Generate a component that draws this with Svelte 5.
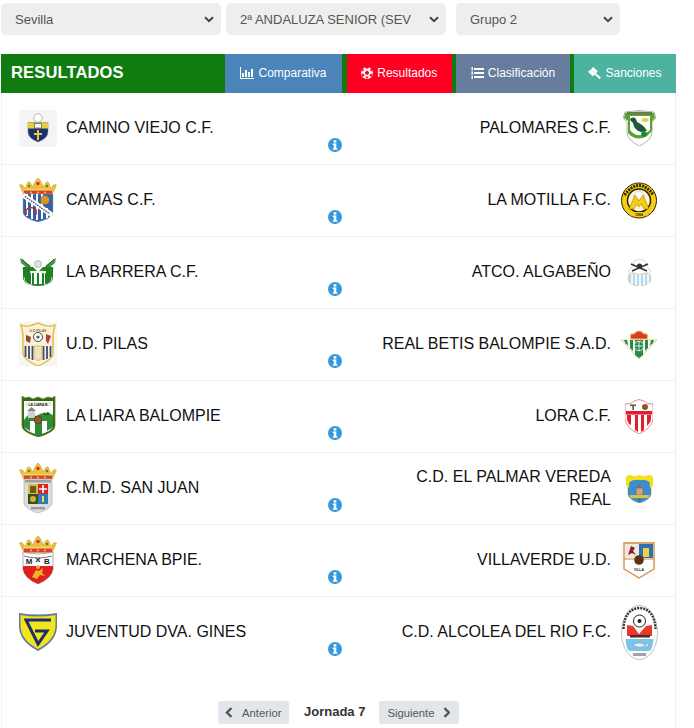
<script>
  const rows = [
    { home: 'CAMINO VIEJO C.F.', hc: 'l1', away: 'PALOMARES C.F.', ac: 'r1' },
    { home: 'CAMAS C.F.', hc: 'l2', away: 'LA MOTILLA F.C.', ac: 'r2' },
    { home: 'LA BARRERA C.F.', hc: 'l3', away: 'ATCO. ALGABEÑO', ac: 'r3' },
    { home: 'U.D. PILAS', hc: 'l4', away: 'REAL BETIS BALOMPIE S.A.D.', ac: 'r4' },
    { home: 'LA LIARA BALOMPIE', hc: 'l5', away: 'LORA C.F.', ac: 'r5' },
    { home: 'C.M.D. SAN JUAN', hc: 'l6', away: 'C.D. EL PALMAR VEREDA REAL', ac: 'r6' },
    { home: 'MARCHENA BPIE.', hc: 'l7', away: 'VILLAVERDE U.D.', ac: 'r7' },
    { home: 'JUVENTUD DVA. GINES', hc: 'l8', away: 'C.D. ALCOLEA DEL RIO F.C.', ac: 'r8' }
  ];
</script>

{#snippet crown()}
  <path d="M0.5 7 Q3 5.5 4.5 8 L6 11 L8.5 4.5 Q10 3 11.5 5 L13.5 9 L17 2 L19 0 L21 2 L24.5 9 L26.5 5 Q28 3 29.5 4.5 L32 11 L33.5 8 Q35 5.5 37.5 7 L33.5 16 H4.5Z" fill="#edbf3c" stroke="#c6951e" stroke-width=".5"/>
  <path d="M5 12.5 H33 V16.5 H5Z" fill="#d8402f"/>
  <path d="M5 11.5 H33" stroke="#f3d76a" stroke-width="1.4"/>
  <circle cx="19" cy="5.5" r="1.7" fill="#c8352b"/>
  <circle cx="10" cy="8" r="1.2" fill="#3d8a3d"/>
  <circle cx="28" cy="8" r="1.2" fill="#3d8a3d"/>
  <circle cx="12" cy="14.5" r=".9" fill="#f3d76a"/>
  <circle cx="19" cy="14.5" r=".9" fill="#f3d76a"/>
  <circle cx="26" cy="14.5" r=".9" fill="#f3d76a"/>
{/snippet}

{#snippet crest(id)}
  {#if id === 'l1'}
    <svg width="38" height="37" viewBox="0 0 38 37">
      <rect width="38" height="37" fill="#f4f4f4"/>
      <circle cx="19" cy="8" r="4.2" fill="#fff" stroke="#999" stroke-width=".7"/>
      <path d="M9 12.5 H29 V22 Q29 28 19 32 Q9 28 9 22Z" fill="#1d2f78" stroke="#777" stroke-width=".5"/>
      <rect x="9" y="12.5" width="20" height="6" fill="#e9cd3c"/>
      <rect x="15.5" y="13.5" width="7" height="4.5" fill="#f4f4f4" stroke="#333" stroke-width=".5"/>
      <path d="M18 20 h2 v3 h3 v2 h-3 v5 h-2 v-5 h-3 v-2 h3z" fill="#e9cd3c"/>
    </svg>
  {:else if id === 'l2'}
    <svg width="38" height="44" viewBox="0 0 38 44">
      {@render crown()}
      <path d="M4 16 H34 V34 Q34 40 19 44 Q4 40 4 34Z" fill="#2f62a8" stroke="#9aa" stroke-width=".5"/>
      <path d="M8 16 V38 M13 16 V41 M18 16 V42 M23 16 V41 M28 30 V40" stroke="#fff" stroke-width="2"/>
      <path d="M4 17 L33 37" stroke="#fff" stroke-width="5"/>
      <path d="M6 18.5 L31 36" stroke="#333" stroke-width="1.2" stroke-dasharray="1.5 1"/>
      <circle cx="26" cy="22" r="4.6" fill="#d5952c" stroke="#8a5a14" stroke-width=".6"/>
      <path d="M7 37 V32 Q12 27 17 32 V37" fill="none" stroke="#c62828" stroke-width="1.6"/>
    </svg>
  {:else if id === 'l3'}
    <svg width="38" height="30" viewBox="0 0 38 30">
      <path d="M1 1 L12 9 L8 11 L2 6Z" fill="#3d9a3d"/>
      <path d="M37 1 L26 9 L30 11 L36 6Z" fill="#3d9a3d"/>
      <path d="M3 2 L14 13 M35 2 L24 13" stroke="#333" stroke-width=".8"/>
      <circle cx="19" cy="7" r="3.4" fill="#dfe6df" stroke="#6a8a6a" stroke-width=".5"/>
      <path d="M4 13 Q2 9 9 10 L14 10 L19 15 L24 10 L29 10 Q36 9 34 13 V22 Q32 29 19 29 Q6 29 4 22Z" fill="#1e7f24"/>
      <path d="M12 15 H26 V27 H12Z" fill="#fff"/>
      <path d="M14 15 V27 M19 15 V28 M24 15 V27" stroke="#1e7f24" stroke-width="2"/>
      <path d="M11 15 H27" stroke="#eaf2ea" stroke-width="2.2"/>
      <path d="M5 20 Q5 27 13 28 M33 20 Q33 27 25 28" stroke="#cfe4cf" fill="none"/>
    </svg>
  {:else if id === 'l4'}
    <svg width="38" height="44" viewBox="0 0 38 44">
      <rect width="38" height="44" fill="#f6f5f2"/>
      <path d="M2 3 Q8 6 19 1 Q30 6 36 3 L34 12 V32 Q33 38 19 44 Q5 38 4 32 V12Z" fill="#fbf3d8" stroke="#e2b432" stroke-width="1.3"/>
      <text x="19" y="9.5" class="tiny" text-anchor="middle">U.D.PILAS</text>
      <path d="M6.5 24 v11 M10 24 v13 M13.5 24 v14 M24.5 24 v14 M28 24 v13 M31.5 24 v11" stroke="#3f4a7c" stroke-width="1.8"/>
      <circle cx="19" cy="15" r="4.5" fill="#fff" stroke="#333" stroke-width=".9"/>
      <circle cx="19" cy="15" r="1.6" fill="#3a4fa0"/>
      <path d="M7 13 l5 2 l-1 6 l-4 -2z" fill="#8f4a3a"/>
      <path d="M27 12 l5 2 l-3 8 l-2 -3z" fill="#b53a4a"/>
      <path d="M15 24 H23 V36 Q19 41 15 36Z" fill="#efe4b8" stroke="#d2ae45" stroke-width=".7"/>
    </svg>
  {:else if id === 'l5'}
    <svg width="35" height="41" viewBox="0 0 35 41">
      <path d="M1 0 L4 2 L8 1 L12 3 L17 1 L22 3 L27 1 L31 2 L34 0 V30 Q34 36 17.5 41 Q1 36 1 30Z" fill="#2a6a1e" stroke="#8c7a1c" stroke-width=".8"/>
      <path d="M3 5 H32 V25 H3Z" fill="#fff"/>
      <rect x="4" y="6" width="27" height="4" fill="#e9ecd9"/>
      <text x="17.5" y="9.6" class="tiny dark" text-anchor="middle">LA LIARA B.</text>
      <path d="M3 24 Q8 15 15 20 Q24 14 32 19 V26 H3Z" fill="#2f8f35"/>
      <rect x="7" y="15" width="7" height="7" fill="#cfcfcf"/>
      <path d="M6 15 L10.5 11 L15 15Z" fill="#888"/>
      <text x="26" y="19" class="tiny dark" text-anchor="middle">L.B.</text>
      <path d="M3 25 H32 V30 Q32 35 17.5 39 Q3 35 3 30Z" fill="#fff"/>
      <path d="M3 25 H9 V35 L3 31Z M14 25 H21 V39 L17.5 40 L14 39Z M26 25 H32 V31 L26 35Z" fill="#2b8a33"/>
      <circle cx="17" cy="24" r="4" fill="#8c5a2a" stroke="#4d3214" stroke-width=".6"/>
    </svg>
  {:else if id === 'l6'}
    <svg width="38" height="50" viewBox="0 0 38 50">
      {@render crown()}
      <path d="M5 16 H33 V40 Q32 46 19 50 Q6 46 5 40Z" fill="#dcdcdc" stroke="#a6a6a6" stroke-width=".6"/>
      <rect x="6" y="17" width="26" height="2.5" fill="#777" opacity=".6"/>
      <rect x="9" y="21" width="10" height="10" fill="#d3c04a"/>
      <rect x="19" y="21" width="10" height="10" fill="#d3272a"/>
      <rect x="9" y="31" width="10" height="10" fill="#3f4a1e"/>
      <rect x="19" y="31" width="10" height="10" fill="#2b7fb5"/>
      <rect x="11" y="23" width="6" height="7" fill="#6a5d1a"/>
      <path d="M24 22 v8 M20 26 h8" stroke="#fff" stroke-width="1.6"/>
      <circle cx="14" cy="36" r="3" fill="#d0b630"/>
      <rect x="23" y="33" width="2" height="6" fill="#e5e04d"/>
      <rect x="12" y="44" width="14" height="2.4" fill="#666" opacity=".55"/>
    </svg>
  {:else if id === 'l7'}
    <svg width="38" height="48" viewBox="0 0 38 48">
      {@render crown()}
      <path d="M4 16 Q19 20 34 16 V33 Q33 42 19 48 Q5 42 4 33Z" fill="#fff" stroke="#8a8a8a" stroke-width=".7"/>
      <path d="M4 30 H34 V33 Q33 42 19 48 Q5 42 4 33Z" fill="#e21f1f"/>
      <path d="M5 20 Q19 24 33 20" fill="none" stroke="#555" stroke-width=".8"/>
      <text x="10" y="28" class="mb" text-anchor="middle">M</text>
      <text x="28" y="28" class="mb" text-anchor="middle">B</text>
      <path d="M17 22 l4 4 M21 22 l-4 4" stroke="#444" stroke-width="1.2"/>
      <circle cx="19" cy="31" r="2" fill="#e6b23a"/>
      <path d="M13 41 L17 34 L20 35 L24 32 L23 37 L26 40 L21 39 L18 43Z" fill="#f0b429"/>
    </svg>
  {:else if id === 'l8'}
    <svg width="38" height="38" viewBox="0 0 38 38">
      <path d="M0 0 Q19 3 38 0 V13 Q38 28 19 38 Q0 28 0 13Z" fill="#5f7aa0"/>
      <path d="M1.5 2 Q19 5 36.5 2 V13 Q36 27 19 36 Q2 27 1.5 13Z" fill="#f2e51c"/>
      <path d="M32 7 H7 L19 31 L28 18 H16" fill="none" stroke="#1c2f6b" stroke-width="3"/>
    </svg>
  {:else if id === 'r1'}
    <svg width="33" height="36" viewBox="0 0 33 36">
      <path d="M2 2 Q16 -1 31 2 L33 8 L29 12 V22 Q29 30 16.5 36 Q4 30 4 22 V12 L0 8Z" fill="#fff" stroke="#a88" stroke-width=".7"/>
      <path d="M2 3 Q16 0 31 3 L32 8 L29 11 V21 L24 26 Q16 31 8 26 L5 23 V11 L1 8Z" fill="#55a82c"/>
      <path d="M7 6 H27 V20 L22 24 Q15 27 10 23 L7 20Z" fill="#fff"/>
      <rect x="4" y="2" width="25" height="2.5" fill="#6c7a4a"/>
      <path d="M8 8 Q13 6 14 12 Q21 15 24 21 L18 22 Q11 20 10 13 L7 10Z" fill="#1e5a3a"/>
      <circle cx="21" cy="24" r="2.8" fill="#148a3e"/>
      <ellipse cx="22" cy="10" rx="3.5" ry="2.2" fill="#e2d35e"/>
    </svg>
  {:else if id === 'r2'}
    <svg width="36" height="37" viewBox="0 0 36 37">
      <circle cx="18" cy="18.5" r="17.5" fill="#f6cd12" stroke="#2a2408" stroke-width="1"/>
      <circle cx="18" cy="18.5" r="11.5" fill="#fff7c8" stroke="#2a2408" stroke-width="1.5"/>
      <path d="M12 14 Q18 4 24 14 L18 18Z" fill="#fff" stroke="#999" stroke-width=".4"/>
      <path d="M8 27 L14 13 L18 19 L22 13 L28 27 H23 L20 22 L18 25 L16 22 L13 27Z" fill="#f6cd12" stroke="#8a7108" stroke-width=".5"/>
      <path d="M3.5 13 Q18 -6 32.5 13" fill="none" stroke="#2a2408" stroke-width="3" stroke-dasharray="2 1"/>
      <path d="M9 30 H27 V33.5 H9Z" fill="#f6cd12"/>
      <text x="18" y="33.5" class="tiny dark" text-anchor="middle">1984</text>
    </svg>
  {:else if id === 'r3'}
    <svg width="25" height="27" viewBox="0 0 25 27">
      <path d="M2 14 Q0 12 5 8 L7 2 L12.5 0 L18 2 L20 8 Q25 12 23 14" fill="#fff" stroke="#dcc9a5" stroke-width=".8"/>
      <path d="M4 5 L20 12 M21 5 L5 12" stroke="#333" stroke-width="1.6"/>
      <circle cx="12.5" cy="7" r="2.6" fill="#333"/>
      <path d="M1 20 Q1 13 7 14 Q12 17 18 14 Q24 13 24 20 Q24 26 12.5 27 Q1 26 1 20Z" fill="#b4dbf0" stroke="#dcc9a5" stroke-width=".8"/>
      <path d="M5 15 V25 M9 15 V26 M13 16 V27 M17 15 V26 M21 15 V25" stroke="#fff" stroke-width="1.6"/>
    </svg>
  {:else if id === 'r4'}
    <svg width="36" height="30" viewBox="0 0 36 30">
      <path d="M0 11 H36 L18 30Z" fill="#fff" stroke="#e3bf54" stroke-width=".7"/>
      <path d="M3 11 H6 L7.5 17 L4 14Z M9 11 H12 V22 L9 19Z M14 11 H22 V26 L18 29 L14 26Z M24 11 H27 V19 L24 22Z M30 11 H33 L32 14 L28.5 17Z" fill="#2a8a4a"/>
      <circle cx="18" cy="17" r="4.8" fill="#2a8a4a" stroke="#fff" stroke-width=".8"/>
      <path d="M13 17 H23 M18 12 V22" stroke="#fff" stroke-width=".8"/>
      <path d="M10 10 Q8 4 13 5 Q18 -1 23 5 Q28 4 26 10Z" fill="#d83a2e" stroke="#e8b93a" stroke-width="1.1"/>
    </svg>
  {:else if id === 'r5'}
    <svg width="28" height="35" viewBox="0 0 28 35">
      <path d="M0 5 Q7 5 9 2 Q14 -1 19 2 Q21 5 28 5 V20 Q27 29 14 35 Q1 29 0 20Z" fill="#fff" stroke="#ea7b85" stroke-width=".9"/>
      <rect x="5" y="5.5" width="6" height="1.6" fill="#1e7a32"/>
      <rect x="7.4" y="7" width="1.4" height="4" fill="#5a3a18"/>
      <circle cx="20" cy="8" r="3" fill="#8a5a1e"/>
      <rect x="1" y="12" width="26" height="3.6" fill="#e01f2e"/>
      <path d="M2 16 H6 V26 L4 25 Q2 22 2 20Z M10 16 H13 V33 L10 31Z M16 16 H19 V31 L16 33Z M22 16 H26 V20 Q26 23 22 27Z" fill="#e01f2e"/>
    </svg>
  {:else if id === 'r6'}
    <svg width="29" height="29" viewBox="0 0 29 29">
      <path d="M3 6 Q14 2 26 6 V20 Q25 26 14.5 29 Q4 26 3 20Z" fill="#3c8ed0" stroke="#777" stroke-width=".5"/>
      <path d="M1 6 Q0 1 5 1 Q9 3 14.5 1 Q20 3 24 1 Q29 1 28 6 Q29 11 26 14 Q24 13 25 9 Q24 7 20 6 H9 Q5 7 4 9 Q5 13 3 14 Q0 11 1 6Z" fill="#f4df1c"/>
      <rect x="11" y="14" width="7" height="7" fill="#c9a884" stroke="#6b4f33" stroke-width=".5"/>
      <rect x="13" y="11" width="3" height="3" fill="#8f6e4d"/>
      <rect x="5" y="21" width="19" height="3" fill="#d8c44a"/>
      <circle cx="14.5" cy="26" r="1.8" fill="#2e8b45"/>
    </svg>
  {:else if id === 'r7'}
    <svg width="36" height="37" viewBox="0 0 36 37">
      <rect width="36" height="37" fill="#fbfbfb"/>
      <path d="M3 1 H33 V27 L18 36 L3 27Z" fill="#fff" stroke="#d08a3e" stroke-width="1.3"/>
      <rect x="4" y="2" width="14" height="14" fill="#f3e6e0"/>
      <rect x="18" y="2" width="14" height="14" fill="#2f6fb2"/>
      <path d="M7 13 L10 4 L14 6 L12 9 L15 13 L11 11Z" fill="#8a1f1f"/>
      <rect x="22" y="6" width="6" height="9" fill="#ecd14a"/>
      <path d="M3 17 H33" stroke="#d08a3e" stroke-width="1"/>
      <circle cx="18" cy="18" r="4.8" fill="#5a3318"/>
      <text x="18" y="29" class="tiny dark" text-anchor="middle">VILLA</text>
    </svg>
  {:else if id === 'r8'}
    <svg width="37" height="55" viewBox="0 0 37 55">
      <ellipse cx="18.5" cy="27.5" rx="18" ry="27" fill="#fff" stroke="#999" stroke-width=".6"/>
      <path d="M2.5 24 Q3.5 4 18.5 3 Q33.5 4 34.5 24" fill="none" stroke="#333" stroke-width="2.4" stroke-dasharray="2 1"/>
      <path d="M6 20 L12 21 L18 29 L25 21 L31 20 L31 31 H6Z" fill="#e83a2c"/>
      <circle cx="18.5" cy="16" r="6" fill="#fff" stroke="#222" stroke-width="1"/>
      <circle cx="18.5" cy="16" r="2" fill="#222"/>
      <path d="M9 30 H29 V32.500 H9Z" fill="#4d2a22"/>
      <path d="M4.5 34 H32.5 Q32 43 29 46 H8 Q5 43 4.5 34Z" fill="#7cc5ea"/>
      <path d="M12 40 Q18 36 24 40 L27 38 V42 L24 40.5 Q18 44 12 40Z" fill="#e8f2f6" stroke="#789" stroke-width=".4"/>
      <rect x="12" y="48" width="13" height="3" fill="#666" opacity=".6"/>
    </svg>
  {/if}
{/snippet}

<div class="page">
  <div class="filters">
    <select class="s1"><option>Sevilla</option></select>
    <select class="s2"><option>2ª ANDALUZA SENIOR (SEVILLA)</option></select>
    <select class="s3"><option>Grupo 2</option></select>
  </div>

  <header class="bar">
    <h1>RESULTADOS</h1>
    <a class="tab t1">
      <svg width="14" height="12" viewBox="0 0 14 12" fill="#fff"><path d="M0 0h1v11h13v1H0z"/><rect x="2" y="6" width="2" height="4"/><rect x="5" y="3" width="2" height="7"/><rect x="8" y="5" width="2" height="5"/><rect x="11" y="2" width="2" height="8"/></svg>
      Comparativa
    </a>
    <a class="tab t2">
      <svg width="12" height="12" viewBox="0 0 12 12"><circle cx="6" cy="6" r="6" fill="#fff"/><path d="M6 3.6 8.2 5.2 7.4 7.8H4.6L3.8 5.2Z" fill="#ff0022"/><path d="M3.5.8 6 1.7 8.5.8 7 0H5ZM.4 4.5 2.4 4 3 1.6 1 2.6ZM11.6 4.5 9.6 4 9 1.6 11 2.6ZM1.6 9.8 3.5 9 2.8 6.9 .4 6.6ZM10.4 9.8 8.5 9 9.2 6.9 11.6 6.6ZM4.4 9.6 6 11.9 7.6 9.6Z" fill="#ff0022"/></svg>
      Resultados
    </a>
    <a class="tab t3">
      <svg width="13" height="12" viewBox="0 0 13 12" fill="#fff"><rect x="3" y="1" width="10" height="2"/><rect x="3" y="5" width="10" height="2"/><rect x="3" y="9" width="10" height="2"/><rect x="0.5" y="0" width="1.4" height="3.4"/><rect x="0.5" y="4.4" width="1.4" height="3.2"/><rect x="0.5" y="8.6" width="1.4" height="3.4"/></svg>
      Clasificación
    </a>
    <a class="tab t4">
      <svg width="13" height="12" viewBox="0 0 13 12" fill="#fff"><path d="M5 0 9.8 4.3 7.6 6.8 2.8 2.5Z"/><path d="M0 4.8 2.6 2.4 7.4 6.8 4.8 9.2Z"/><path d="M7.6 6 13 10.4 11.6 12 6.4 7.4Z"/></svg>
      Sanciones
    </a>
  </header>

  <main class="panel">
    {#each rows as r}
      <div class="row">
        <div class="team">
          <div class="logo">{@render crest(r.hc)}</div>
          <span class="name">{r.home}</span>
        </div>
        <svg class="info" width="14" height="14" viewBox="0 0 14 14">
          <circle cx="7" cy="7" r="7" fill="#3498db"/>
          <rect x="5.7" y="2.2" width="2.6" height="2.4" fill="#fff"/>
          <path d="M4.8 5.6H8.3V10.2H9.3V11.7H4.8V10.2H5.8V7.1H4.8Z" fill="#fff"/>
        </svg>
        <div class="team away">
          <span class="name">{r.away}</span>
          <div class="logo">{@render crest(r.ac)}</div>
        </div>
      </div>
    {/each}

    <nav class="pager">
      <button class="prev">
        <svg width="8" height="11" viewBox="0 0 8 11"><path d="M6.5 1 2 5.5 6.5 10" fill="none" stroke="#555" stroke-width="2.4"/></svg>
        <span>Anterior</span>
      </button>
      <strong>Jornada 7</strong>
      <button class="next">
        <span>Siguiente</span>
        <svg width="8" height="11" viewBox="0 0 8 11"><path d="M1.5 1 6 5.5 1.5 10" fill="none" stroke="#555" stroke-width="2.4"/></svg>
      </button>
    </nav>
  </main>
</div>

<style>
  :global(body) {
    margin: 0;
    background: #fff;
    font-family: "Liberation Sans", Arial, sans-serif;
  }
  .page {
    width: 675px;
    height: 728px;
    margin-left: 1px;
    overflow: hidden;
  }
  .filters {
    display: flex;
    padding-top: 3px;
    height: 54px;
    box-sizing: border-box;
  }
  select {
    appearance: none;
    height: 32px;
    border: 0;
    border-radius: 5px;
    background-color: #eee;
    background-image: url("data:image/svg+xml,%3Csvg xmlns='http://www.w3.org/2000/svg' width='10' height='7' viewBox='0 0 10 7'%3E%3Cpath d='M1 1.2 5 5.2 9 1.2' fill='none' stroke='%23444' stroke-width='2'/%3E%3C/svg%3E");
    background-repeat: no-repeat;
    background-position: right 7px center;
    color: #555;
    font: 13px "Liberation Sans", Arial, sans-serif;
    padding: 0 35px 0 14px;
  }
  .s1 { width: 220px; margin-right: 5px; }
  .s2 { width: 220px; margin-right: 10px; }
  .s3 { width: 164px; }

  .bar {
    display: flex;
    height: 39px;
    background: #107c10;
    color: #fff;
  }
  h1 {
    flex: 1;
    margin: 0;
    padding: 8px 0 0 10px;
    font-size: 16.5px;
    letter-spacing: .15px;
    line-height: 20px;
    font-weight: bold;
  }
  .tab {
    display: flex;
    align-items: center;
    justify-content: center;
    gap: 4px;
    font-size: 12px;
    color: #fff;
    padding-bottom: 1px;
    box-sizing: border-box;
  }
  .t1 { width: 117px; background: #4a84b8; margin-right: 4.5px; }
  .t2 { width: 105.5px; background: #ff0022; margin-right: 4px; }
  .t3 { width: 114px; background: #667d9e; margin-right: 4px; }
  .t4 { width: 102px; background: #4db3a0; }

  .panel {
    border-left: 1px solid #f0f0f0;
    border-right: 1px solid #eee;
    height: 635px;
    box-sizing: border-box;
    padding: 0 17px;
  }
  .row {
    display: grid;
    grid-template-columns: 309px 14px 1fr;
    height: 72px;
    box-sizing: border-box;
    border-bottom: 1px solid #f0f2f5;
    margin: 0 -17px;
    padding: 0 17px;
  }
  .row:last-of-type {
    border-bottom-color: transparent;
  }
  .team {
    display: flex;
    align-items: center;
    gap: 9px;
    min-width: 0;
    color: #111;
    font-size: 16px;
    line-height: 23px;
    padding-bottom: 1px;
  }
  .away {
    justify-content: flex-end;
    text-align: right;
  }
  .away .name { max-width: 232px; }
  .name { margin-top: -1px; }
  .logo {
    flex: none;
    width: 38px;
    display: flex;
    justify-content: center;
  }
  .logo svg { display: block; }
  .info {
    align-self: end;
    margin-bottom: 12px;
  }
  .tiny {
    font: bold 3.4px "Liberation Sans", Arial, sans-serif;
    fill: #8a6d1c;
  }
  .tiny.dark { fill: #222; }
  .mb {
    font: bold 8px "Liberation Sans", Arial, sans-serif;
    fill: #222;
  }
  .pager {
    display: flex;
    align-items: center;
    margin-top: 32px;
    padding-left: 199px;
    height: 23px;
  }
  button {
    display: flex;
    align-items: center;
    height: 23px;
    border: 0;
    border-radius: 3px;
    background: #e2e6ea;
    color: #555;
    font: 11.3px "Liberation Sans", Arial, sans-serif;
  }
  .prev { width: 71px; gap: 9px; padding: 0 7px; }
  .next { width: 80px; gap: 8px; padding: 0 9px 0 8px; }
  strong {
    margin: 0 14px 0 15px;
    font-size: 13px;
    color: #333;
    position: relative;
    top: -1px;
  }
</style>
